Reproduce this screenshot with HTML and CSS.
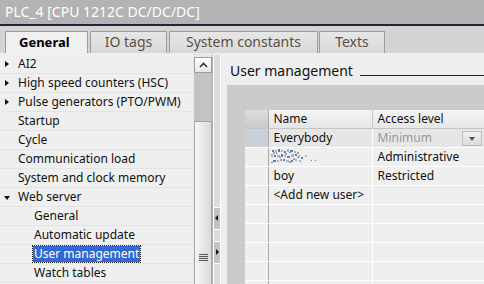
FILE: index.html
```html
<!DOCTYPE html>
<html>
<head>
  <meta charset="utf-8">
  <link rel="stylesheet" href="styles.css">
</head>
<body>
  <div class="window">
    <div class="titlebar">PLC_4 [CPU 1212C DC/DC/DC]</div>

    <div class="tabstrip">
      <div class="tab active tab-general">General</div>
      <div class="tab tab-io">IO tags</div>
      <div class="tab tab-const">System constants</div>
      <div class="tab tab-texts">Texts</div>
    </div>

    <div class="main">
      <ul class="tree">
        <li class="node closed">AI2</li>
        <li class="node closed">High speed counters (HSC)</li>
        <li class="node closed">Pulse generators (PTO/PWM)</li>
        <li class="node">Startup</li>
        <li class="node">Cycle</li>
        <li class="node">Communication load</li>
        <li class="node">System and clock memory</li>
        <li class="node open">Web server</li>
        <li class="node child">General</li>
        <li class="node child">Automatic update</li>
        <li class="node child"><span class="selected">User management</span></li>
        <li class="node child">Watch tables</li>
      </ul>

      <div class="vscroll">
        <div class="scroll-btn">
          <svg width="9" height="6" viewBox="0 0 9 6"><path d="M1 5 L4.5 1.5 L8 5" fill="none" stroke="#333" stroke-width="1.6"/></svg>
        </div>
        <div class="scroll-track"></div>
        <div class="scroll-thumb"><span class="grip"></span></div>
      </div>

      <div class="splitter">
        <div class="split-btn left"></div>
        <div class="split-btn right"></div>
      </div>

      <div class="pane">
        <div class="heading">
          <span>User management</span>
          <span class="rule"></span>
        </div>

        <div class="grid-box">
          <table class="users">
            <colgroup>
              <col class="c-sel">
              <col class="c-name">
              <col class="c-level">
            </colgroup>
            <tr class="head">
              <th class="sel"></th>
              <th>Name</th>
              <th>Access level</th>
            </tr>
            <tr class="current">
              <td class="sel"></td>
              <td>Everybody</td>
              <td class="muted">Minimum<span class="drop"></span></td>
            </tr>
            <tr>
              <td class="sel"></td>
              <td>
                <!-- blurred-out user name -->
                <svg class="blur" width="48" height="17" viewBox="0 0 48 17">
                  <g fill="#5d7bb0">
                    <rect x="1" y="2" width="2" height="2"/><rect x="7" y="1" width="2" height="3"/>
                    <rect x="13" y="3" width="2" height="2"/><rect x="19" y="2" width="3" height="2"/>
                    <rect x="3" y="7" width="2" height="2"/><rect x="10" y="6" width="2" height="3"/>
                    <rect x="16" y="8" width="3" height="2"/><rect x="24" y="6" width="2" height="2"/>
                    <rect x="2" y="12" width="3" height="2"/><rect x="12" y="11" width="2" height="2"/>
                    <rect x="20" y="12" width="2" height="2"/><rect x="30" y="9" width="2" height="2"/>
                  </g>
                  <g fill="#9fb4d6">
                    <rect x="4" y="2" width="2" height="2"/><rect x="10" y="2" width="2" height="2"/>
                    <rect x="16" y="1" width="2" height="3"/><rect x="23" y="3" width="2" height="2"/>
                    <rect x="0" y="6" width="2" height="3"/><rect x="6" y="7" width="3" height="2"/>
                    <rect x="13" y="7" width="2" height="2"/><rect x="20" y="6" width="3" height="3"/>
                    <rect x="27" y="7" width="2" height="2"/><rect x="6" y="12" width="2" height="2"/>
                    <rect x="15" y="12" width="3" height="2"/><rect x="24" y="11" width="2" height="2"/>
                    <rect x="34" y="7" width="2" height="2"/><rect x="28" y="12" width="2" height="2"/>
                  </g>
                  <g fill="#c79a6e">
                    <rect x="2" y="4" width="2" height="2"/><rect x="14" y="5" width="2" height="2"/>
                    <rect x="9" y="11" width="2" height="2"/><rect x="22" y="10" width="2" height="2"/>
                    <rect x="26" y="4" width="2" height="2"/><rect x="18" y="13" width="2" height="2"/>
                  </g>
                  <g fill="#7a8596">
                    <rect x="5" y="4" width="1" height="2"/><rect x="18" y="4" width="2" height="1"/>
                    <rect x="8" y="9" width="2" height="1"/><rect x="26" y="9" width="2" height="1"/>
                    <rect x="0" y="14" width="2" height="1"/><rect x="40" y="12" width="1" height="1"/>
                    <rect x="44" y="12" width="1" height="1"/>
                  </g>
                </svg>
              </td>
              <td>Administrative</td>
            </tr>
            <tr>
              <td class="sel"></td>
              <td>boy</td>
              <td>Restricted</td>
            </tr>
            <tr>
              <td class="sel"></td>
              <td>&lt;Add new user&gt;</td>
              <td></td>
            </tr>
            <tr><td class="sel"></td><td></td><td></td></tr>
            <tr><td class="sel"></td><td></td><td></td></tr>
            <tr><td class="sel"></td><td></td><td></td></tr>
            <tr><td class="sel"></td><td></td><td></td></tr>
            <tr><td class="sel"></td><td></td><td></td></tr>
          </table>
        </div>
      </div>
    </div>
  </div>
</body>
</html>
```

FILE: styles.css
```css
* {
    padding: 0px;
    margin: 0px;
    box-sizing: border-box;
}

body {
    width: 484px;
    height: 284px;
    overflow: hidden;
    background-color: #efefef;
    font-family: "Noto Sans", "DejaVu Sans", sans-serif;
    font-size: 12px;
    color: #111;
}

.window {
    height: 284px;
    display: flex;
    flex-direction: column;
}

/* title */
.titlebar {
    height: 26px;
    flex-shrink: 0;
    background-color: #b3b3b3;
    border-bottom: 2px solid #1f2739;
    color: #fff;
    font-size: 14px;
    line-height: 24px;
    padding-left: 5px;
}

/* tabs */
.tabstrip {
    height: 27px;
    flex-shrink: 0;
    display: flex;
    gap: 2px;
    padding: 5px 0 0 5px;
    background-color: #d4d4d4;
}

.tab {
    height: 22px;
    line-height: 20px;
    text-align: center;
    border: 1px solid #9c9c9c;
    border-bottom: none;
    background: linear-gradient(#e6e6e6, #d9d9d9);
    color: #5c4f45;
    font-size: 14px;
    white-space: nowrap;
}

.tab-general {
    width: 83px;
}

.tab-io {
    width: 77px;
}

.tab-const {
    width: 149px;
}

.tab-texts {
    width: 66px;
    margin-left: -1px;
}

.tab.active {
    background: #f0f0f0;
    color: #000;
    font-weight: bold;
    font-size: 13px;
    text-align: left;
    padding-left: 13px;
}

/* body */
.main {
    flex: 1;
    display: flex;
    min-height: 0;
}

.tree {
    width: 193px;
    flex-shrink: 0;
    list-style: none;
    padding-top: 2px;
    background-color: #efefef;
}

.node {
    height: 19px;
    line-height: 18px;
    border-bottom: 1px solid #e4e4e4;
    padding-left: 18px;
    position: relative;
    white-space: nowrap;
}

.node.closed::before {
    content: "";
    position: absolute;
    left: 5px;
    top: 6px;
    border-left: 4px solid #111;
    border-top: 3.5px solid transparent;
    border-bottom: 3.5px solid transparent;
}

.node.open::before {
    content: "";
    position: absolute;
    left: 4px;
    top: 8px;
    border-top: 4px solid #111;
    border-left: 3.5px solid transparent;
    border-right: 3.5px solid transparent;
}

.node.child {
    padding-left: 34px;
}

.selected {
    display: inline-block;
    margin-left: -1px;
    padding: 0 1px;
    line-height: 16px;
    background-color: #3467cf;
    color: #fff;
    outline: 1px dotted #222;
}

/* tree scrollbar */
.vscroll {
    width: 20px;
    flex-shrink: 0;
    padding: 4px 1px 0 1px;
    background-color: #e8e8e8;
    overflow: hidden;
}

.scroll-btn {
    height: 16px;
    border: 1px solid #9e9e9e;
    background: linear-gradient(#ffffff, #e6e6e6);
    display: flex;
    align-items: center;
    justify-content: center;
}

.scroll-track {
    height: 48px;
    background-color: #c3c3c3;
}

.scroll-thumb {
    height: 300px;
    border: 1px solid #a6a6a6;
    background: linear-gradient(to right, #f6f6f6, #dadada);
    position: relative;
}

.grip {
    position: absolute;
    left: 4px;
    top: 132px;
    width: 9px;
    height: 7px;
    border-top: 1px solid #555;
    border-bottom: 1px solid #555;
}

.grip::before,
.grip::after {
    content: "";
    position: absolute;
    left: 0;
    width: 9px;
    height: 1px;
    background-color: #555;
}

.grip::before {
    top: 1px;
}

.grip::after {
    top: 3px;
}

/* splitter */
.splitter {
    width: 8px;
    flex-shrink: 0;
    margin-top: 2px;
    border-left: 1px solid #fff;
    border-right: 1px solid #fff;
    background-color: #dcdcdc;
    box-shadow: -1px 0 0 #b0b0b0, 1px 0 0 #b0b0b0;
    padding-top: 152px;
}

.split-btn {
    height: 23px;
    background-color: #c2c2c2;
    border-top: 1px solid #fff;
    border-bottom: 1px solid #fff;
    position: relative;
    margin-bottom: 11px;
}

.split-btn.left::before {
    content: "";
    position: absolute;
    left: 1px;
    top: 7px;
    border-right: 3px solid #111;
    border-top: 3.5px solid transparent;
    border-bottom: 3.5px solid transparent;
}

.split-btn.right::before {
    content: "";
    position: absolute;
    left: 2px;
    top: 7px;
    border-left: 3px solid #111;
    border-top: 3.5px solid transparent;
    border-bottom: 3.5px solid transparent;
}

/* right pane */
.pane {
    flex: 1;
    min-width: 0;
    background-color: #eeeeee;
    padding-top: 8px;
    overflow: hidden;
}

.heading {
    height: 20px;
    display: flex;
    padding-left: 9px;
    font-size: 14px;
    line-height: 20px;
    color: #111;
}

.heading .rule {
    flex: 1;
    height: 1px;
    align-self: flex-end;
    margin: 0 0 5px 7px;
    background-color: #222;
}

.grid-box {
    margin: 4px 0 0 6px;
    height: 300px;
    padding: 25px 0 0 18px;
    background-color: #cbcbcb;
}

.users {
    width: 240px;
    table-layout: fixed;
    border-collapse: collapse;
}

.c-sel {
    width: 23px;
}

.c-name {
    width: 104px;
}

.users th,
.users td {
    height: 19px;
    padding: 0 0 0 5px;
    text-align: left;
    font-weight: normal;
    white-space: nowrap;
    overflow: hidden;
    background-color: #efefef;
    border-bottom: 1px solid #fff;
    border-right: 1px solid #fff;
    position: relative;
}

.users td.sel,
.users th.sel {
    padding: 0;
    border-right: 1px solid #a9a9a9;
}

.users .head th {
    height: 18px;
    background: linear-gradient(#f4f4f4, #e6e6e6);
    border-bottom: 1px solid #c4c4c4;
    border-right: 1px solid #c8c8c8;
}

.users .head th.sel {
    background: linear-gradient(#dedede, #cacaca);
    border-right: 1px solid #a9a9a9;
}

.users .current td {
    background-color: #e6e6e6;
}

.users .current td.sel {
    background-color: #c8d0da;
}

.muted {
    color: #999;
}

.drop {
    position: absolute;
    right: 2px;
    top: 2px;
    width: 20px;
    height: 15px;
    border: 1px solid #bdbdbd;
    background: linear-gradient(#f0f0f0, #dcdcdc);
}

.drop::before {
    content: "";
    position: absolute;
    left: 6px;
    top: 5px;
    border-top: 4px solid #555;
    border-left: 3.5px solid transparent;
    border-right: 3.5px solid transparent;
}

.blur {
    display: block;
    margin-left: -3px;
}
```
